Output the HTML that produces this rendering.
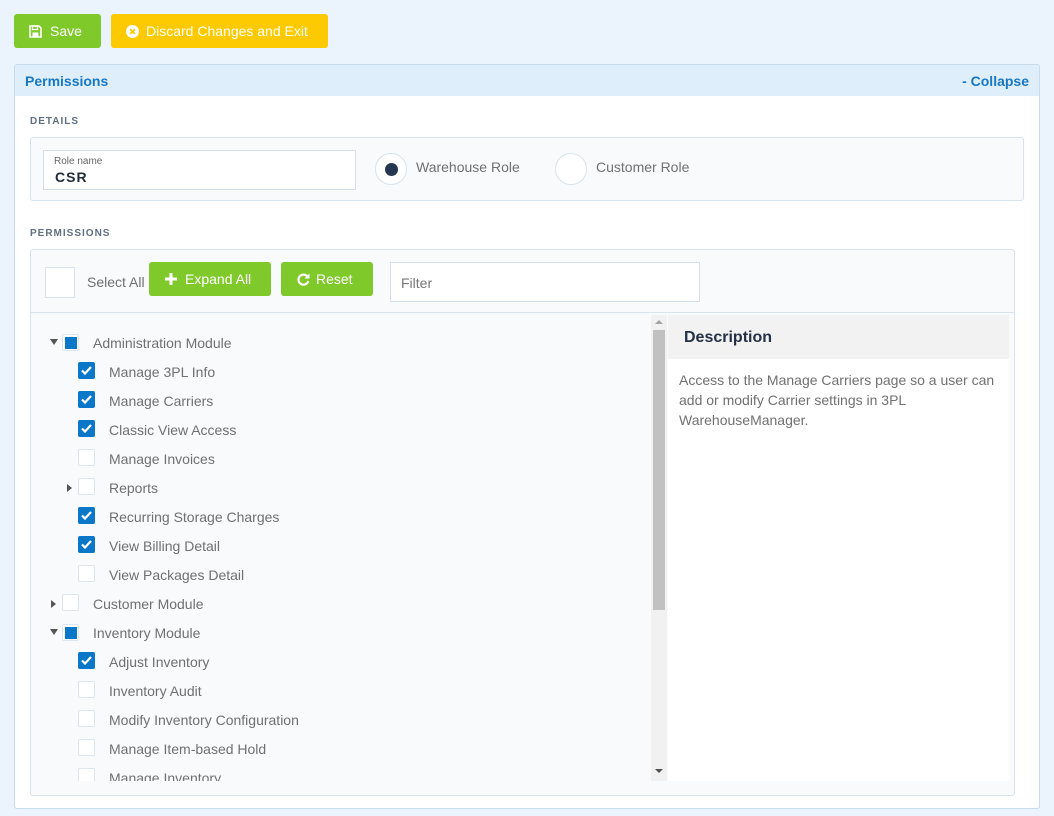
<!DOCTYPE html>
<html><head><meta charset="utf-8"><style>
*{box-sizing:border-box;margin:0;padding:0}
body{width:1054px;height:816px;background:#ebf4fd;font-family:"Liberation Sans",sans-serif;position:relative;overflow:hidden;color:#6e6e6e}
.abs{position:absolute}
.btn{position:absolute;border-radius:3px;color:#fff;font-size:14px;display:flex;align-items:center}
.green{background:#7fc92b}
.lbl{font-size:10px;font-weight:bold;letter-spacing:1px;color:#5f6f82}
.cb{position:absolute;width:17px;height:17px;border:1px solid #dde6ee;background:#fff;border-radius:2px}
.cb.on{background:#0a77c9;border-color:#0a77c9}
.cb.part::after{content:"";position:absolute;left:2px;top:2px;width:12px;height:12px;background:#0a77c9}
.row{position:absolute;font-size:14px;color:#707070}
.tri{position:absolute;width:0;height:0}
</style></head><body>
<div class="btn green" style="left:14px;top:14px;width:87px;height:34px;padding-left:15px">
<svg width="13" height="13" viewBox="0 0 13 13" style="margin-right:8px"><path d="M1 1h9l2 2v9H1z" fill="none" stroke="#fff" stroke-width="1.6"/><rect x="3.5" y="1" width="5" height="3.5" fill="none" stroke="#fff" stroke-width="1.3"/><rect x="3.5" y="7.5" width="6" height="4" fill="#fff"/></svg>Save</div>
<div class="btn" style="left:111px;top:14px;width:217px;height:34px;padding-left:15px;background:#fdc900">
<svg width="13" height="13" viewBox="0 0 13 13" style="margin-right:7px"><circle cx="6.5" cy="6.5" r="6.5" fill="#fff"/><path d="M4.2 4.2l4.6 4.6M8.8 4.2l-4.6 4.6" stroke="#fdc900" stroke-width="1.8"/></svg>Discard Changes and Exit</div>

<div class="abs" style="left:14px;top:64px;width:1026px;height:745px;background:#fff;border:1px solid #c9dcec;border-radius:3px;overflow:hidden">
 <div style="height:31px;background:#deeefb;display:flex;justify-content:space-between;align-items:center;padding:0 10px;color:#1878c4;font-size:14px;font-weight:bold"><span>Permissions</span><span>- Collapse</span></div>
</div>
<div class="abs lbl" style="left:30px;top:116px">DETAILS</div>
<div class="abs" style="left:30px;top:137px;width:994px;height:64px;background:#f8fafc;border:1px solid #d8e3ec;border-radius:3px"></div>
<div class="abs" style="left:43px;top:150px;width:313px;height:40px;background:#fff;border:1px solid #d3e0ea">
 <div style="position:absolute;left:10px;top:5px;font-size:10px;color:#666">Role name</div>
 <div style="position:absolute;left:11px;top:18px;font-size:14px;font-weight:bold;color:#222c3a;letter-spacing:1px">CSR</div>
</div>
<div class="abs" style="left:375px;top:153px;width:32px;height:32px;border-radius:50%;background:#fff;border:1px solid #d8e3ec"><div style="position:absolute;left:9px;top:9px;width:13px;height:13px;border-radius:50%;background:#253650"></div></div>
<div class="abs" style="left:416px;top:159px;font-size:14px;color:#707070">Warehouse Role</div>
<div class="abs" style="left:555px;top:153px;width:32px;height:32px;border-radius:50%;background:#fff;border:1px solid #d8e3ec"></div>
<div class="abs" style="left:596px;top:159px;font-size:14px;color:#707070">Customer Role</div>

<div class="abs lbl" style="left:30px;top:228px">PERMISSIONS</div>
<div class="abs" style="left:30px;top:249px;width:985px;height:547px;background:#f8fafc;border:1px solid #d8e3ec;border-radius:3px"></div>
<div class="abs" style="left:31px;top:312px;width:983px;height:1px;background:#d8e3ec"></div>
<div class="abs" style="left:45px;top:267px;width:30px;height:31px;background:#fff;border:1px solid #d8e3ec"></div>
<div class="abs" style="left:87px;top:274px;font-size:14px;color:#707070">Select All</div>
<div class="btn green" style="left:149px;top:262px;width:122px;height:34px;padding-left:16px"><svg width="12" height="12" viewBox="0 0 12 12" style="margin-right:8px"><path d="M6 0v12M0 6h12" stroke="#fff" stroke-width="3"/></svg>Expand All</div>
<div class="btn green" style="left:281px;top:262px;width:92px;height:34px;padding-left:16px"><svg width="13" height="13" viewBox="0 0 13 13" style="margin-right:6px"><path d="M11 4.5A5 5 0 1 0 11.3 8" fill="none" stroke="#fff" stroke-width="2.2"/><path d="M12.5 0.5v5h-5z" fill="#fff"/></svg>Reset</div>
<div class="abs" style="left:390px;top:262px;width:310px;height:40px;background:#fff;border:1px solid #d3e0ea;font-size:14px;color:#777;padding:12px 0 0 10px">Filter</div>

<div class="abs" style="left:651px;top:315px;width:16px;height:466px;background:#f1f1f1"></div>
<div class="abs" style="left:653px;top:330px;width:12px;height:280px;background:#c1c1c1"></div>
<div class="tri" style="left:655px;top:320px;border:4px solid transparent;border-bottom-color:#a3a3a3;border-top:0"></div>
<div class="tri" style="left:655px;top:769px;border:4px solid transparent;border-top-color:#505050;border-bottom:0"></div>
<div class="abs" style="left:668px;top:315px;width:341px;height:466px;background:#fff"></div>
<div class="abs" style="left:668px;top:315px;width:341px;height:44px;background:#f2f2f2;font-size:16px;font-weight:bold;color:#253045;padding:14px 0 0 16px">Description</div>
<div class="abs" style="left:679px;top:370px;width:325px;font-size:14px;line-height:20px;color:#707070">Access to the Manage Carriers page so a user can add or modify Carrier settings in 3PL WarehouseManager.</div>

<div class="abs" style="left:31px;top:316px;width:619px;height:465px;overflow:hidden">
<div style="position:relative;left:-31px;top:-316px">
<!--rows-->
<div class="tri" style="left:50px;top:339px;border:4px solid transparent;border-top:6px solid #555;border-bottom:0"></div>
<div class="cb part" style="left:62px;top:334px"></div><div class="row" style="left:93px;top:335px">Administration Module</div>

<div class="cb on" style="left:78px;top:362px"><svg width="15" height="15" viewBox="0 0 15 15"><path d="M3 7.5l3 3 6-6.5" fill="none" stroke="#fff" stroke-width="2.2"/></svg></div><div class="row" style="left:109px;top:364px">Manage 3PL Info</div>
<div class="cb on" style="left:78px;top:391px"><svg width="15" height="15" viewBox="0 0 15 15"><path d="M3 7.5l3 3 6-6.5" fill="none" stroke="#fff" stroke-width="2.2"/></svg></div><div class="row" style="left:109px;top:393px">Manage Carriers</div>
<div class="cb on" style="left:78px;top:420px"><svg width="15" height="15" viewBox="0 0 15 15"><path d="M3 7.5l3 3 6-6.5" fill="none" stroke="#fff" stroke-width="2.2"/></svg></div><div class="row" style="left:109px;top:422px">Classic View Access</div>
<div class="cb" style="left:78px;top:449px"></div><div class="row" style="left:109px;top:451px">Manage Invoices</div>
<div class="tri" style="left:67px;top:484px;border:4px solid transparent;border-left:5px solid #555;border-right:0"></div>
<div class="cb" style="left:78px;top:478px"></div><div class="row" style="left:109px;top:480px">Reports</div>
<div class="cb on" style="left:78px;top:507px"><svg width="15" height="15" viewBox="0 0 15 15"><path d="M3 7.5l3 3 6-6.5" fill="none" stroke="#fff" stroke-width="2.2"/></svg></div><div class="row" style="left:109px;top:509px">Recurring Storage Charges</div>
<div class="cb on" style="left:78px;top:536px"><svg width="15" height="15" viewBox="0 0 15 15"><path d="M3 7.5l3 3 6-6.5" fill="none" stroke="#fff" stroke-width="2.2"/></svg></div><div class="row" style="left:109px;top:538px">View Billing Detail</div>
<div class="cb" style="left:78px;top:565px"></div><div class="row" style="left:109px;top:567px">View Packages Detail</div>
<div class="tri" style="left:51px;top:600px;border:4px solid transparent;border-left:5px solid #555;border-right:0"></div>
<div class="cb" style="left:62px;top:594px"></div><div class="row" style="left:93px;top:596px">Customer Module</div>
<div class="tri" style="left:50px;top:629px;border:4px solid transparent;border-top:6px solid #555;border-bottom:0"></div>
<div class="cb part" style="left:62px;top:624px"></div><div class="row" style="left:93px;top:625px">Inventory Module</div>
<div class="cb on" style="left:78px;top:652px"><svg width="15" height="15" viewBox="0 0 15 15"><path d="M3 7.5l3 3 6-6.5" fill="none" stroke="#fff" stroke-width="2.2"/></svg></div><div class="row" style="left:109px;top:654px">Adjust Inventory</div>
<div class="cb" style="left:78px;top:681px"></div><div class="row" style="left:109px;top:683px">Inventory Audit</div>
<div class="cb" style="left:78px;top:710px"></div><div class="row" style="left:109px;top:712px">Modify Inventory Configuration</div>
<div class="cb" style="left:78px;top:739px"></div><div class="row" style="left:109px;top:741px">Manage Item-based Hold</div>
<div class="cb" style="left:78px;top:768px"></div><div class="row" style="left:109px;top:770px">Manage Inventory</div>
</div></div>
</body></html>
